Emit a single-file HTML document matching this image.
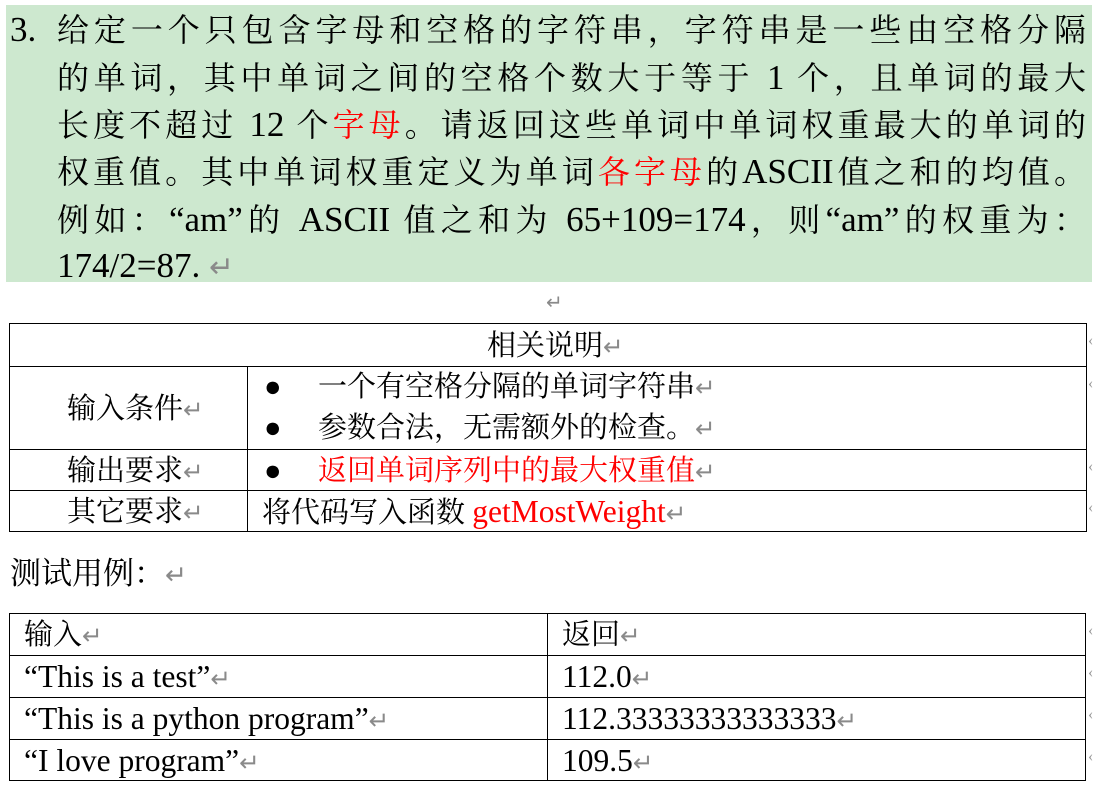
<!DOCTYPE html>
<html><head><meta charset="utf-8"><style>
body{margin:0;width:1093px;height:788px;background:#fff;position:relative;overflow:hidden;font-family:"Liberation Serif","Noto Serif CJK SC",serif;color:#000}
.a{position:absolute;white-space:nowrap}
.g{position:absolute;left:6px;top:5px;width:1086px;height:277px;background:#cde8cf}
.l{position:absolute;left:57px;width:1029px;font-size:32px;line-height:48px;text-align:justify;text-align-last:justify;white-space:nowrap}
.e{font-size:35px}
.r{color:#f00}
.rt{color:#8a8a8a;font-size:0.85em;font-family:"DejaVu Sans",sans-serif}
.h{position:absolute;background:#000;height:1px}
.v{position:absolute;background:#000;width:1px}
.t{font-size:29px;line-height:42px}
.t .e{font-size:31.5px}
.m{position:absolute;left:1088px;font-size:16px;color:#999}
</style></head><body>
<div class="g"></div>
<div class="a" style="left:10px;top:6px;font-size:35px;line-height:48px">3.</div>
<div class="l" style="top:6px">给定一个只包含字母和空格的字符串，字符串是一些由空格分隔</div>
<div class="l" style="top:54px">的单词，其中单词之间的空格个数大于等于 <span class="e">1</span> 个，且单词的最大</div>
<div class="l" style="top:101px">长度不超过 <span class="e">12</span> 个<span class="r">字母</span>。请返回这些单词中单词权重最大的单词的</div>
<div class="l" style="top:148px">权重值。其中单词权重定义为单词<span class="r">各字母</span>的<span class="e">ASCII</span>值之和的均值。</div>
<div class="l" style="top:196px">例如：<span class="e">“am”</span>的 <span class="e">ASCII</span> 值之和为 <span class="e">65+109=174</span>，则<span class="e">“am”</span>的权重为：</div>
<div class="a" style="left:57px;top:242px;font-size:35px;line-height:48px">174/2=87. <span class="rt">↵</span></div>
<div class="a rt" style="left:546px;top:290px;font-size:20px">↵</div>

<div class="h" style="left:9px;top:323px;width:1078px"></div>
<div class="h" style="left:9px;top:366px;width:1078px"></div>
<div class="h" style="left:9px;top:449px;width:1078px"></div>
<div class="h" style="left:9px;top:490px;width:1078px"></div>
<div class="h" style="left:9px;top:531px;width:1078px"></div>
<div class="v" style="left:9px;top:323px;height:209px"></div>
<div class="v" style="left:1086px;top:323px;height:209px"></div>
<div class="v" style="left:247px;top:366px;height:166px"></div>
<div class="a t" style="left:487px;top:325px">相关说明<span class="rt">↵</span></div>
<div class="a t" style="left:67px;top:388px">输入条件<span class="rt">↵</span></div>
<div class="a t" style="left:264px;top:366px">●</div><div class="a t" style="left:318px;top:366px">一个有空格分隔的单词字符串<span class="rt">↵</span></div>
<div class="a t" style="left:264px;top:407px">●</div><div class="a t" style="left:318px;top:407px">参数合法，无需额外的检查。<span class="rt">↵</span></div>
<div class="a t" style="left:67px;top:450px">输出要求<span class="rt">↵</span></div>
<div class="a t" style="left:264px;top:450px">●</div><div class="a t" style="left:318px;top:450px"><span class="r">返回单词序列中的最大权重值</span><span class="rt">↵</span></div>
<div class="a t" style="left:67px;top:491px">其它要求<span class="rt">↵</span></div>
<div class="a t" style="left:262px;top:491px">将代码写入函数 <span class="r e">getMostWeight</span><span class="rt">↵</span></div>
<div class="m" style="top:332px">‹</div><div class="m" style="top:375px">‹</div><div class="m" style="top:458px">‹</div><div class="m" style="top:499px">‹</div>

<div class="a" style="left:10px;top:553px;font-size:31px;line-height:42px">测试用例：<span class="rt">↵</span></div>

<div class="h" style="left:9px;top:613px;width:1077px"></div>
<div class="h" style="left:9px;top:655px;width:1077px"></div>
<div class="h" style="left:9px;top:697px;width:1077px"></div>
<div class="h" style="left:9px;top:739px;width:1077px"></div>
<div class="h" style="left:9px;top:780px;width:1077px"></div>
<div class="v" style="left:9px;top:613px;height:168px"></div>
<div class="v" style="left:1085px;top:613px;height:168px"></div>
<div class="v" style="left:547px;top:613px;height:168px"></div>
<div class="a t" style="left:24px;top:614px">输入<span class="rt">↵</span></div>
<div class="a t" style="left:24px;top:656px"><span class="e">“This is a test”</span><span class="rt">↵</span></div>
<div class="a t" style="left:24px;top:698px"><span class="e">“This is a python program”</span><span class="rt">↵</span></div>
<div class="a t" style="left:24px;top:740px"><span class="e">“I love program”</span><span class="rt">↵</span></div>
<div class="a t" style="left:562px;top:614px">返回<span class="rt">↵</span></div>
<div class="a t" style="left:562px;top:656px"><span class="e">112.0</span><span class="rt">↵</span></div>
<div class="a t" style="left:562px;top:698px"><span class="e">112.33333333333333</span><span class="rt">↵</span></div>
<div class="a t" style="left:562px;top:740px"><span class="e">109.5</span><span class="rt">↵</span></div>
<div class="m" style="top:622px">‹</div><div class="m" style="top:664px">‹</div><div class="m" style="top:706px">‹</div><div class="m" style="top:748px">‹</div>
</body></html>
